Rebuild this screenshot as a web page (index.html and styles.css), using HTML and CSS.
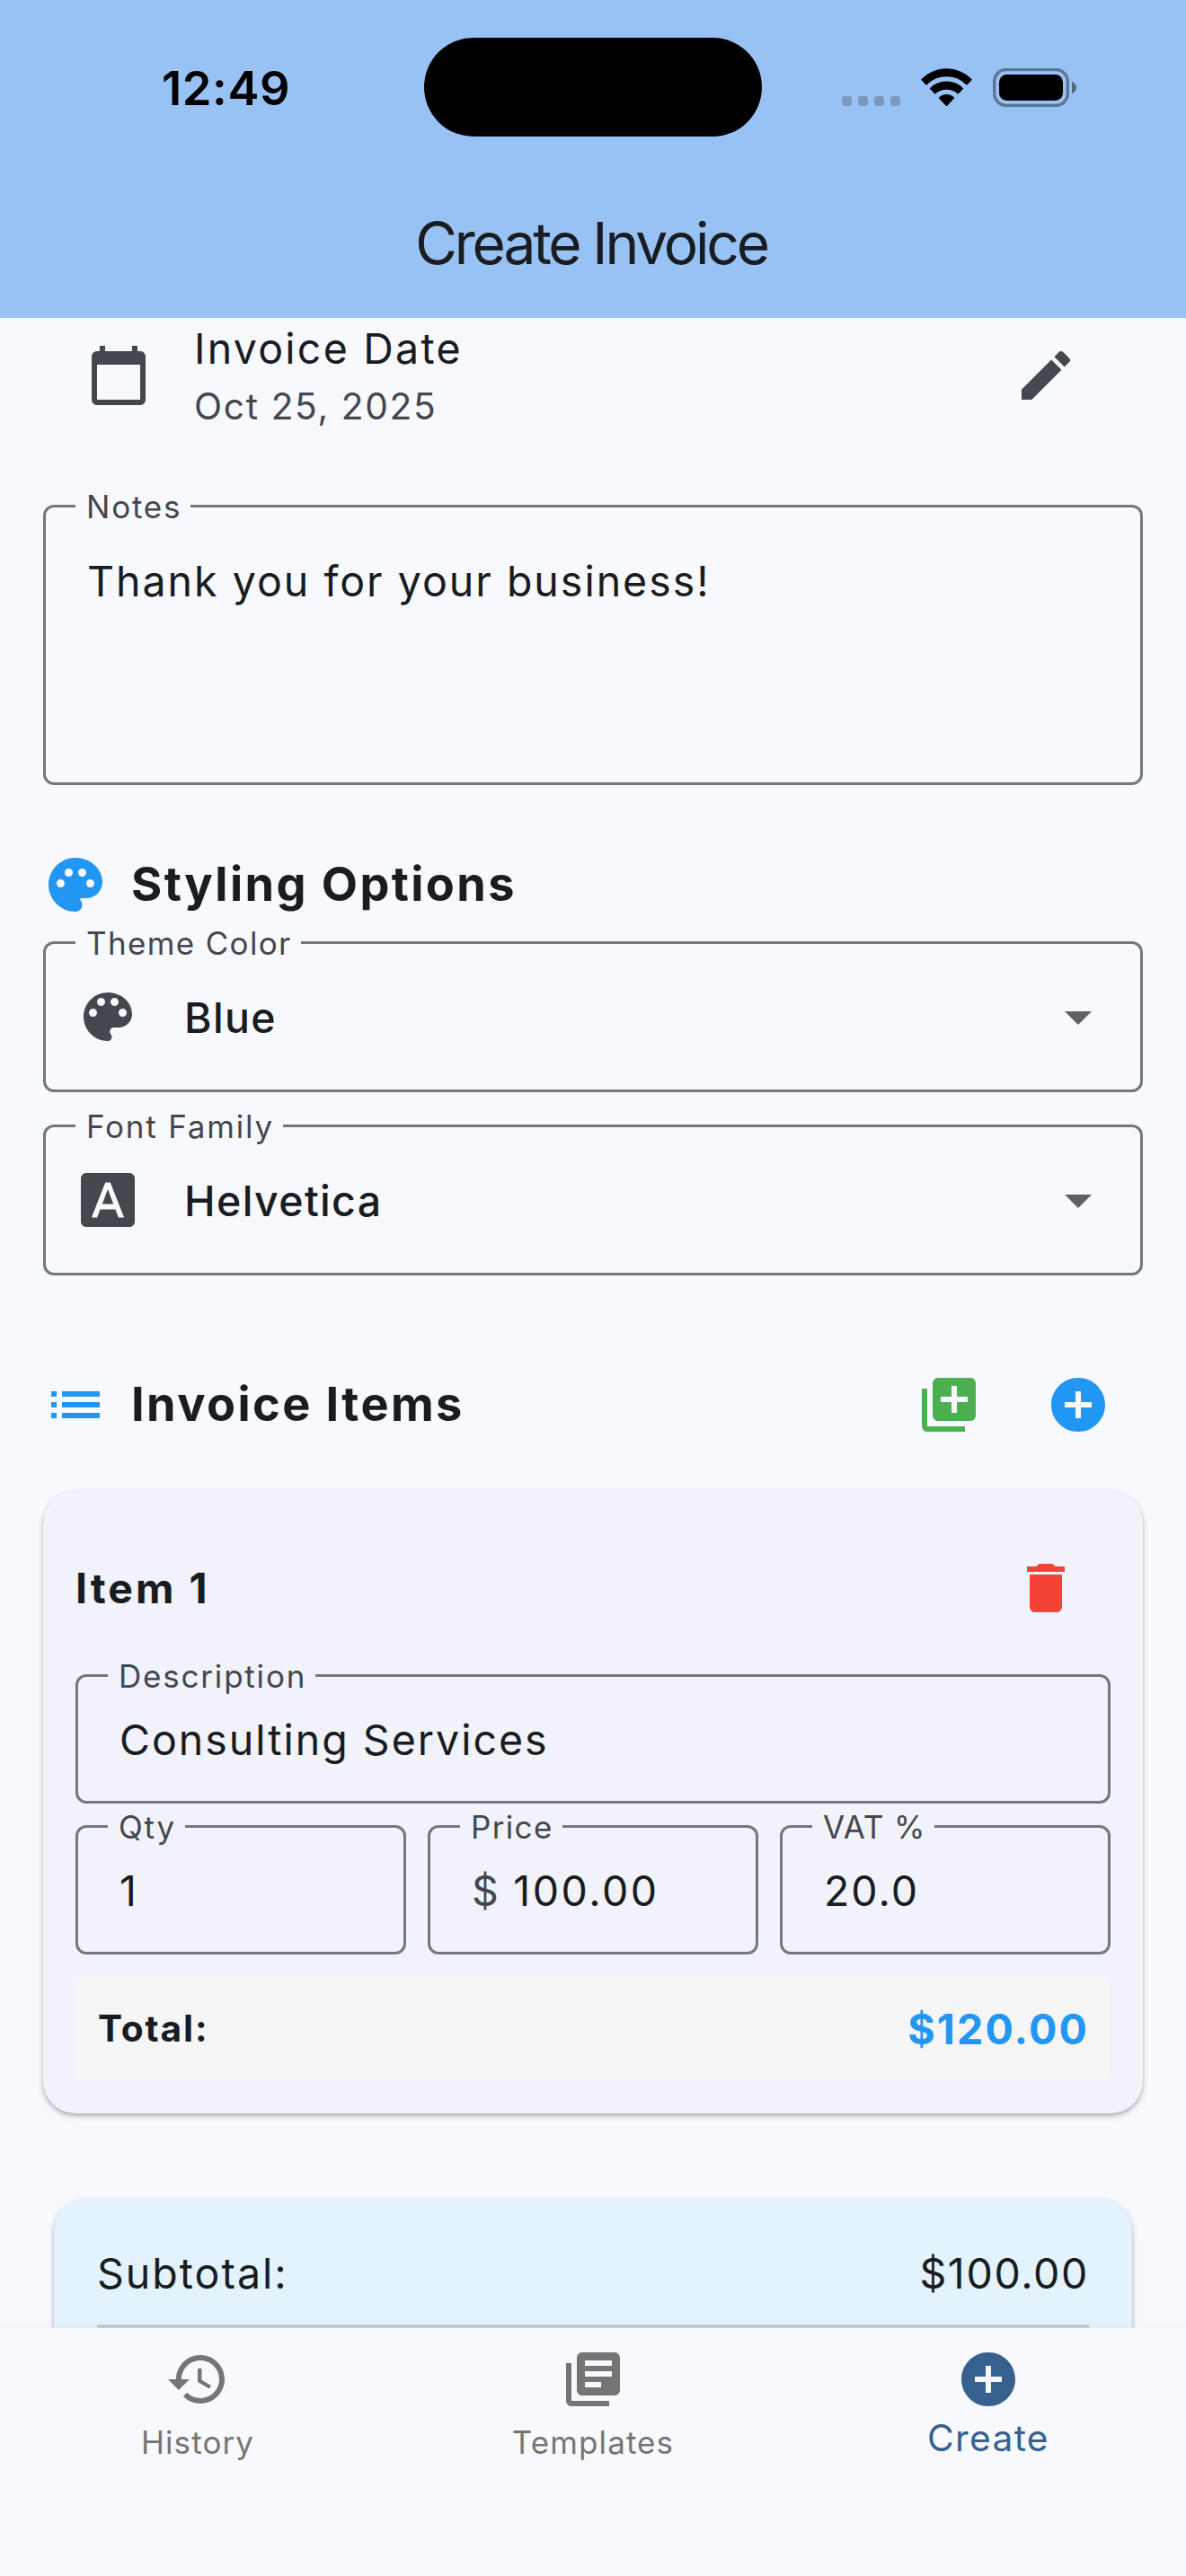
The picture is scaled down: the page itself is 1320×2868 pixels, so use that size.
FILE: index.html
```html
<!DOCTYPE html>
<html lang="en">
<head>
<meta charset="utf-8">
<title>Create Invoice</title>
<link rel="stylesheet" href="styles.css">
</head>
<body>
<header class="app-bar">
  <div class="status">
    <span class="time">12:49</span>
    <span class="island"></span>
    <svg class="indicators" viewBox="937 73 263 47" width="263" height="47">
      <g opacity=".2"><rect x="937" y="106" width="11" height="11" rx="3.5"/><rect x="955" y="106" width="11" height="11" rx="3.5"/><rect x="973" y="106" width="11" height="11" rx="3.5"/><rect x="991" y="106" width="11" height="11" rx="3.5"/></g>
      <path d="M1025 87.5a39.4 39.4 0 0 1 57 0l-5.6 5.9-.8 0a31 31 0 0 0-44.2 0l-.8 0zM1034.7 97.4a26.5 26.5 0 0 1 37.6 0l-5.6 6-.8 0a18.9 18.9 0 0 0-24.8 0l-.8 0zM1044.6 108a12 12 0 0 1 17.8 0l-8.4 9-1 0z"/>
      <rect x="1106.7" y="76.7" width="81.6" height="39.6" rx="13" fill="none" stroke="#000" stroke-width="3.3" opacity=".4"/>
      <rect x="1112" y="82" width="71" height="29" rx="8.5"/>
      <path opacity=".45" d="M1193 89.7c3 1.200 5 3.700 5 6.800s-2 5.600-5 6.800z"/>
    </svg>
  </div>
  <h1 class="title">Create Invoice</h1>
</header>

<main class="content">
  <section class="date-row">
    <svg class="icon" viewBox="0 0 24 24"><path d="M20 3h-1V1h-2v2H7V1H5v2H4c-1.1 0-2 .9-2 2v16c0 1.1.9 2 2 2h16c1.1 0 2-.9 2-2V5c0-1.100-.9-2-2-2zm0 18H4V8h16v13z"/></svg>
    <div class="date-text">
      <div class="date-title">Invoice Date</div>
      <div class="date-value">Oct 25, 2025</div>
    </div>
    <svg class="icon" viewBox="0 0 24 24"><path d="M3 17.250V21h3.750L17.810 9.940l-3.750-3.750L3 17.250zM20.710 7.040c.39-.39.39-1.020 0-1.410l-2.340-2.340c-.39-.39-1.020-.39-1.410 0l-1.830 1.830 3.750 3.750 1.830-1.830z"/></svg>
  </section>

  <div class="field notes"><span class="label">Notes</span><span class="value">Thank you for your business!</span></div>

  <div class="heading styling">
    <svg class="icon blue" viewBox="0 0 24 24"><path d="M12 2C6.490 2 2 6.490 2 12s4.490 10 10 10c1.380 0 2.500-1.120 2.500-2.500 0-.61-.23-1.200-.64-1.670-.08-.1-.13-.21-.13-.33 0-.28.22-.5.5-.5H16c3.310 0 6-2.690 6-6 0-4.960-4.490-9-10-9zm5.500 11c-.83 0-1.500-.67-1.500-1.500s.67-1.500 1.500-1.500 1.500.67 1.500 1.500-.67 1.500-1.500 1.500zm-3-4c-.83 0-1.500-.67-1.500-1.500S13.670 6 14.500 6s1.500.67 1.500 1.500S15.330 9 14.500 9zM5 11.500c0-.83.67-1.500 1.500-1.500s1.500.67 1.500 1.500S7.330 13 6.500 13 5 12.330 5 11.500zm6-4c0 .83-.67 1.500-1.500 1.500S8 8.330 8 7.500 8.670 6 9.500 6s1.500.67 1.500 1.500z"/></svg>
    <h2>Styling Options</h2>
  </div>

  <div class="field select">
    <span class="label tight">Theme Color</span>
    <svg class="icon" viewBox="0 0 24 24"><path d="M12 3c-4.970 0-9 4.030-9 9s4.030 9 9 9c.83 0 1.500-.67 1.500-1.500 0-.39-.15-.74-.39-1.010-.23-.26-.38-.61-.38-.99 0-.83.67-1.500 1.500-1.500H16c2.760 0 5-2.240 5-5 0-4.420-4.030-8-9-8zm-5.500 9c-.83 0-1.500-.67-1.500-1.500S5.670 9 6.500 9 8 9.670 8 10.500 7.330 12 6.500 12zm3-4C8.670 8 8 7.330 8 6.500S8.670 5 9.500 5s1.500.67 1.500 1.500S10.330 8 9.500 8zm5 0c-.83 0-1.500-.67-1.500-1.500S13.670 5 14.500 5s1.500.67 1.500 1.500S15.330 8 14.500 8zm3 4c-.83 0-1.500-.67-1.500-1.500S16.670 9 17.500 9s1.500.67 1.500 1.500-.67 1.500-1.500 1.500z"/></svg>
    <span class="choice">Blue</span>
    <svg class="icon arrow" viewBox="0 0 24 24"><path d="M7 10l5 5 5-5z"/></svg>
  </div>
  <div class="field select">
    <span class="label">Font Family</span>
    <svg class="icon" viewBox="0 0 24 24"><path d="M9.930 13.500h4.140L12 7.980zM20 2H4c-1.100 0-2 .9-2 2v16c0 1.100.9 2 2 2h16c1.100 0 2-.9 2-2V4c0-1.100-.9-2-2-2zm-4.050 16.500l-1.140-3H9.170l-1.120 3H5.960l5.110-13h1.860l5.110 13h-2.090z"/></svg>
    <span class="choice">Helvetica</span>
    <svg class="icon arrow" viewBox="0 0 24 24"><path d="M7 10l5 5 5-5z"/></svg>
  </div>

  <div class="heading items">
    <svg class="icon blue" viewBox="0 0 24 24"><path d="M3 13h2v-2H3v2zm0 4h2v-2H3v2zm0-8h2V7H3v2zm4 4h14v-2H7v2zm0 4h14v-2H7v2zM7 7v2h14V7H7z"/></svg>
    <h2>Invoice Items</h2>
    <div class="actions">
      <svg class="icon green" viewBox="0 0 24 24"><path d="M4 6H2v14c0 1.100.9 2 2 2h14v-2H4V6zm16-4H8c-1.100 0-2 .9-2 2v12c0 1.100.9 2 2 2h12c1.100 0 2-.9 2-2V4c0-1.100-.9-2-2-2zm-1 9h-4v4h-2v-4H9V9h4V5h2v4h4v2z"/></svg>
      <svg class="icon blue" viewBox="0 0 24 24"><path d="M12 2C6.480 2 2 6.480 2 12s4.480 10 10 10 10-4.480 10-10S17.520 2 12 2zm5 11h-4v4h-2v-4H7v-2h4V7h2v4h4v2z"/></svg>
    </div>
  </div>

  <section class="card">
    <div class="card-head">
      <h3>Item 1</h3>
      <svg class="icon red" viewBox="0 0 24 24"><path d="M6 19c0 1.100.9 2 2 2h8c1.100 0 2-.9 2-2V7H6v12zM19 4h-3.500l-.71-.71c-.18-.18-.44-.29-.7-.29H9.910c-.26 0-.52.11-.7.29L8.500 4H5v2h14V4z"/></svg>
    </div>
    <div class="field"><span class="label">Description</span><span class="value">Consulting Services</span></div>
    <div class="triple">
      <div class="field"><span class="label">Qty</span><span class="value">1</span></div>
      <div class="field"><span class="label tight">Price</span><span class="value price"><span class="prefix">$</span><span>100.00</span></span></div>
      <div class="field"><span class="label vat">VAT %</span><span class="value">20.0</span></div>
    </div>
    <div class="item-total"><strong class="total-label">Total:</strong><strong class="total-value">$120.00</strong></div>
  </section>

  <section class="summary">
    <div class="summary-row"><span>Subtotal:</span><span class="amount">$100.00</span></div>
    <div class="divider"></div>
  </section>
</main>

<nav class="tabs">
  <div class="tab">
    <svg class="icon" viewBox="0 0 24 24"><path d="M13 3c-4.970 0-9 4.030-9 9H1l3.890 3.890.07.14L9 12H6c0-3.870 3.130-7 7-7s7 3.130 7 7-3.130 7-7 7c-1.930 0-3.680-.79-4.940-2.060l-1.420 1.420C8.270 19.990 10.510 21 13 21c4.970 0 9-4.030 9-9s-4.030-9-9-9zm-1 5v5l4.280 2.540.72-1.210-3.500-2.080V8H12z"/></svg>
    <span>History</span>
  </div>
  <div class="tab">
    <svg class="icon" viewBox="0 0 24 24"><path d="M4 6H2v14c0 1.100.9 2 2 2h14v-2H4V6zm16-4H8c-1.100 0-2 .9-2 2v12c0 1.100.9 2 2 2h12c1.100 0 2-.9 2-2V4c0-1.100-.9-2-2-2zm-1 9H9V9h10v2zm-4 4H9v-2h6v2zm4-8H9V5h10v2z"/></svg>
    <span>Templates</span>
  </div>
  <div class="tab active">
    <svg class="icon" viewBox="0 0 24 24"><path d="M12 2C6.480 2 2 6.480 2 12s4.480 10 10 10 10-4.480 10-10S17.520 2 12 2zm5 11h-4v4h-2v-4H7v-2h4V7h2v4h4v2z"/></svg>
    <span>Create</span>
  </div>
</nav>
</body>
</html>
```
FILE: styles.css
```css
:root {
  --surface: #f8f9ff;
  --card: #f2f2fb;
  --text: #191c20;
  --muted: #43474e;
  --outline: #73777f;
  --blue: #2196f3;
}

* { box-sizing: border-box; }

body {
  margin: 0;
  width: 1320px;
  height: 2868px;
  display: flex;
  flex-direction: column;
  overflow: hidden;
  background: var(--surface);
  color: var(--text);
  font: 400 46.5px/60px Inter, sans-serif;
  letter-spacing: 2px;
  white-space: nowrap;
}

h1, h2, h3 { margin: 0; }

.icon {
  display: block;
  flex: none;
  width: 72px;
  height: 72px;
  fill: var(--muted);
}
.icon.blue { fill: var(--blue); }
.icon.green { fill: #4caf50; }
.icon.red { fill: #f44336; }
.icon.arrow { fill: #616161; }

/* Header */
.app-bar {
  flex: none;
  height: 354px;
  padding-top: 42px;
  background: #98c1f4;
}
.status {
  display: grid;
  grid-template-columns: 472px 376px 1fr;
  align-items: center;
  height: 110px;
}
.time {
  padding: 2px 0 0 180px;
  color: #000;
  font-size: 52.5px;
  font-weight: 600;
  letter-spacing: .6px;
}
.island {
  height: 110px;
  border-radius: 55px;
  background: #000;
}
.indicators { margin-left: 89px; }
.title {
  margin-top: 79px;
  padding-right: 4px;
  text-align: center;
  font-size: 64px;
  font-weight: 400;
  line-height: 80px;
  letter-spacing: -3.15px;
}

/* Form */
.content {
  flex: 1;
  min-height: 0;
  overflow: hidden;
  padding: 0 48px;
}
.date-row {
  display: flex;
  align-items: center;
  height: 128px;
  padding: 0 72px 0 48px;
}
.date-text { flex: 1; padding: 3px 0 0 48px; }
.date-title { letter-spacing: 2.24px; }
.date-value {
  margin-top: 7px;
  color: var(--muted);
  font-size: 40.7px;
  line-height: 56px;
  letter-spacing: 1.64px;
}

.field {
  position: relative;
  height: 144px;
  padding: 40px 0 0 46px;
  border: 3px solid var(--outline);
  border-radius: 12px;
  background: inherit;
}
.label {
  position: absolute;
  top: -21px;
  left: 33px;
  padding: 0 10px 0 12px;
  background: var(--surface);
  color: var(--muted);
  font-size: 35px;
  line-height: 40px;
  letter-spacing: 1.8px;
}
.label.tight { letter-spacing: 1.35px; }
.label.vat { letter-spacing: .9px; }
.value { display: block; }
.notes { height: 312px; margin-top: 80px; padding-top: 52px; }

.heading { display: flex; align-items: center; }
.heading h2 {
  padding: 0 0 2px 26px;
  font-size: 52.3px;
  font-weight: 700;
  letter-spacing: 2.4px;
}
.heading.styling { margin: 75px 0 27px; }
.heading.items { margin: 108px 0 60px; }
.actions {
  display: flex;
  gap: 72px;
  margin-left: auto;
  padding-right: 36px;
}

.select {
  display: flex;
  align-items: center;
  height: 168px;
  padding: 0 33px;
}
.select + .select { margin-top: 36px; }
.choice {
  flex: 1;
  padding: 1px 0 0 49px;
  font-weight: 500;
  letter-spacing: 1.35px;
}

/* Invoice item */
.card {
  height: 693px;
  padding: 72px 36px 36px;
  border-radius: 36px;
  background: var(--card);
  box-shadow: 0 3px 6px rgba(0, 0, 0, .24), 0 2px 3px rgba(0, 0, 0, .1);
}
.card .label { background: var(--card); }
.card-head {
  display: flex;
  justify-content: space-between;
  align-items: center;
  margin-bottom: 60px;
  padding-right: 36px;
}
.card-head h3 { font-size: 46.5px; font-weight: 700; letter-spacing: 3px; }
.triple {
  display: grid;
  grid-template-columns: repeat(3, 1fr);
  gap: 24px;
  margin: 24px 0;
}
.price { display: flex; gap: 14px; letter-spacing: 2.5px; }
.prefix { color: var(--muted); }
.item-total {
  display: flex;
  justify-content: space-between;
  align-items: center;
  height: 117px;
  padding: 0 24px 0 25px;
  border-radius: 12px;
  background: #f5f5f5;
}
.total-label { font-size: 40.7px; letter-spacing: 1.84px; }
.total-value { color: var(--blue); letter-spacing: 2.17px; }

/* Totals */
.summary {
  height: 300px;
  margin: 95px 12px 0;
  padding: 53px 48px 0;
  border-radius: 36px;
  background: #e3f2fd;
  box-shadow: 0 3px 6px rgba(0, 0, 0, .24), 0 2px 3px rgba(0, 0, 0, .1);
}
.summary-row { display: flex; justify-content: space-between; }
.amount { letter-spacing: 1.64px; }
.divider {
  height: 4px;
  margin-top: 27px;
  border: solid #d0d8e1;
  border-width: 1px 0;
  background: #bcc2cb;
}

/* Bottom navigation */
.tabs {
  position: relative;
  flex: none;
  display: grid;
  grid-template-columns: repeat(3, 1fr);
  height: 276px;
  padding-top: 21px;
  background: var(--surface);
  box-shadow: 0 -2px 14px rgba(0, 0, 0, .03);
}
.tab {
  display: flex;
  flex-direction: column;
  align-items: center;
  gap: 12px;
  color: #757575;
  font-size: 35px;
  line-height: 44px;
  letter-spacing: 1.1px;
}
.tab .icon { fill: currentColor; }
.tab.active {
  gap: 8px;
  color: #36618e;
  font-size: 40.7px;
  letter-spacing: 1.31px;
}
```
